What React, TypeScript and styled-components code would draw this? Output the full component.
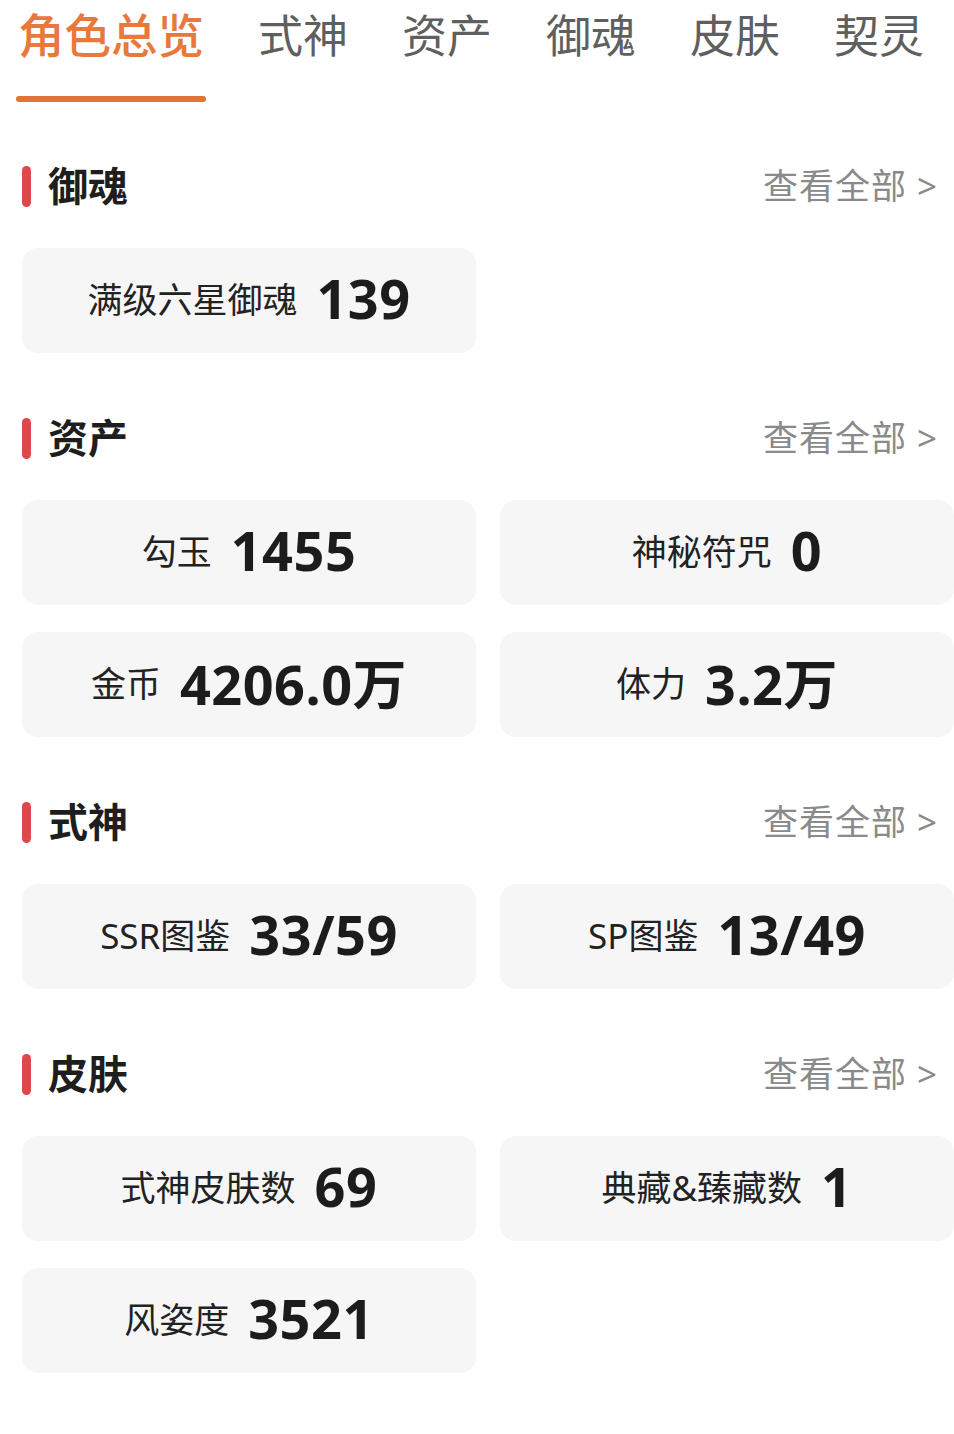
import React from 'react';
import styled, { createGlobalStyle } from 'styled-components';

const GlobalStyle = createGlobalStyle`
  html, body {
    margin: 0;
    padding: 0;
    background: #ffffff;
    overflow-x: hidden;
  }
  body {
    font-family: "Noto Sans", "Noto Sans CJK SC", sans-serif;
    color: #222222;
  }
`;

const Page = styled.div`
  width: 954px;
  min-height: 1434px;
  background: #ffffff;
`;

const TabBar = styled.nav`
  display: flex;
  align-items: flex-start;
  gap: 54px;
  padding: 8px 0 0 18px;
  height: 102px;
  box-sizing: border-box;
`;

const Tab = styled.div<{ $active?: boolean }>`
  display: flex;
  flex-direction: column;
  font-size: ${({ $active }) => ($active ? '46.5px' : '45px')};
  line-height: 55px;
  font-weight: ${({ $active }) => ($active ? 500 : 400)};
  color: ${({ $active }) => ($active ? '#e8783b' : '#5f5f5f')};
  white-space: nowrap;
`;

const TabLine = styled.span`
  display: block;
  width: calc(100% + 4px);
  margin: 33px 0 0 -2px;
  height: 6px;
  border-radius: 3px;
  background: #e27334;
`;

const Section = styled.section`
  margin-top: 60px;

  & + & {
    margin-top: 61px;
  }
`;

const SectionHeader = styled.header`
  display: flex;
  align-items: center;
  justify-content: space-between;
  height: 48px;
  padding: 0 16px 0 22px;
`;

const TitleWrap = styled.div`
  display: flex;
  align-items: center;
`;

const Marker = styled.span`
  width: 9px;
  height: 41px;
  border-radius: 4.5px;
  background: #e0474b;
  margin-right: 17px;
`;

const Title = styled.h2`
  margin: 0;
  font-size: 40px;
  line-height: 48px;
  font-weight: 700;
  color: #1e1e1e;
`;

const ViewAll = styled.span`
  font-size: 35px;
  line-height: 48px;
  color: #8a8a8a;
  letter-spacing: 1px;
`;

const CardGrid = styled.div`
  display: grid;
  grid-template-columns: 454px 454px;
  column-gap: 24px;
  row-gap: 27px;
  padding-left: 22px;
  margin-top: 38px;
`;

const StatCard = styled.div`
  height: 105px;
  box-sizing: border-box;
  padding-bottom: 6px;
  border-radius: 16px;
  background: #f6f6f6;
  display: flex;
  align-items: center;
  justify-content: center;
`;

const StatLabel = styled.span`
  font-size: 35px;
  color: #222222;
`;

const StatValue = styled.span`
  font-size: 54px;
  font-weight: 700;
  color: #1c1c1c;
  margin-left: 19px;
  letter-spacing: 0.5px;
`;

type Stat = { label: string; value: string };

const sections: { title: string; stats: Stat[] }[] = [
  { title: '御魂', stats: [{ label: '满级六星御魂', value: '139' }] },
  {
    title: '资产',
    stats: [
      { label: '勾玉', value: '1455' },
      { label: '神秘符咒', value: '0' },
      { label: '金币', value: '4206.0万' },
      { label: '体力', value: '3.2万' },
    ],
  },
  {
    title: '式神',
    stats: [
      { label: 'SSR图鉴', value: '33/59' },
      { label: 'SP图鉴', value: '13/49' },
    ],
  },
  {
    title: '皮肤',
    stats: [
      { label: '式神皮肤数', value: '69' },
      { label: '典藏&臻藏数', value: '1' },
      { label: '风姿度', value: '3521' },
    ],
  },
];

const tabs = ['角色总览', '式神', '资产', '御魂', '皮肤', '契灵'];

export default function App() {
  return (
    <Page>
      <GlobalStyle />
      <TabBar>
        {tabs.map((t, i) => (
          <Tab key={t} $active={i === 0}>
            {t}
            {i === 0 && <TabLine />}
          </Tab>
        ))}
      </TabBar>
      {sections.map((s) => (
        <Section key={s.title}>
          <SectionHeader>
            <TitleWrap>
              <Marker />
              <Title>{s.title}</Title>
            </TitleWrap>
            <ViewAll>查看全部 &gt;</ViewAll>
          </SectionHeader>
          <CardGrid>
            {s.stats.map((st) => (
              <StatCard key={st.label}>
                <StatLabel>{st.label}</StatLabel>
                <StatValue>{st.value}</StatValue>
              </StatCard>
            ))}
          </CardGrid>
        </Section>
      ))}
    </Page>
  );
}
